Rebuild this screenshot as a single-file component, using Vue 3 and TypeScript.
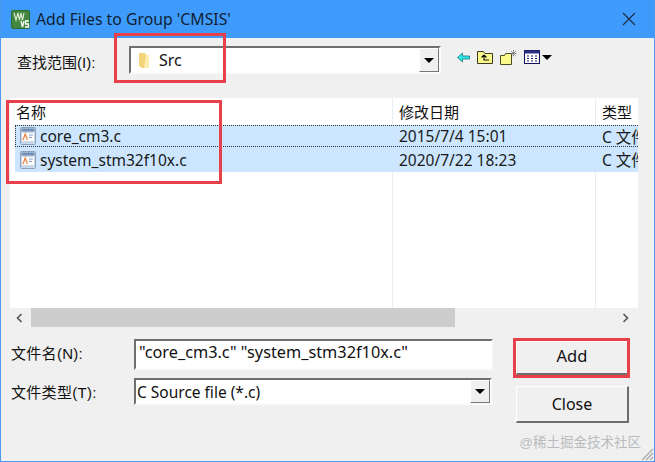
<script setup lang="ts">
interface FileRow { name: string; date: string; type: string; focus: boolean }
const files: FileRow[] = [
  { name: 'core_cm3.c', date: '2015/7/4 15:01', type: 'C 文件', focus: true },
  { name: 'system_stm32f10x.c', date: '2020/7/22 18:23', type: 'C 文件', focus: false },
]
</script>

<template>
  <div class="dialog">
    <header class="titlebar">
      <svg class="logo" width="19" height="19" viewBox="0 0 19 19">
        <rect width="19" height="19" rx="2" fill="#2f6f36" />
        <rect x="1" y="1" width="17" height="17" rx="1.500" fill="#44883f" />
        <path d="M3 3l2 7 2-7M7 3l1.500 7L10 3M10 3l1.500 7L13 3" stroke="#d8e8d0" stroke-width="1.200" fill="none" />
        <path d="M10 11l1.500 6 1.500-6" stroke="#fff" stroke-width="1.300" fill="none" />
        <path d="M18 11h-3.500v3h3v3h-3.500" stroke="#fff" stroke-width="1.300" fill="none" />
      </svg>
      <span class="title">Add Files to Group 'CMSIS'</span>
      <svg class="close-x" width="14" height="14" viewBox="0 0 14 14">
        <path d="M1 1l12 12M13 1L1 13" stroke="#1c2c44" stroke-width="1.100" />
      </svg>
    </header>

    <div class="body">
      <div class="look-row">
        <label class="look-label">查找范围(I):</label>
        <div class="combo look-combo">
          <svg class="folder" width="14" height="17" viewBox="0 0 14 17">
            <path d="M1 1h6l1 2h3v13H4L1 14z" fill="#f3d478" />
            <path d="M8 3h3v13H6z" fill="#fdeeb0" />
          </svg>
          <span class="look-value">Src</span>
          <span class="drop"><i class="tri"></i></span>
        </div>
        <div class="tools">
          <svg width="13" height="11" viewBox="0 0 13 11">
            <path d="M0.500 5.500L5.500 1v3h7v3h-7v3z" fill="#2fe6e6" stroke="#167a80" stroke-width="0.800" />
          </svg>
          <svg width="16" height="14" viewBox="0 0 16 14">
            <path d="M0.500 13.500V1.500h6l1.500 2h7.500v10z" fill="#fbf98c" stroke="#3a3a20" />
            <path d="M7 5L4.500 7.500M7 5l2.500 2.500M7 5v5h5" stroke="#111" stroke-width="1.100" fill="none" />
          </svg>
          <svg width="17" height="15" viewBox="0 0 17 15">
            <path d="M0.500 14.500V5.500h4l1-2h6v11z" fill="#fbf98c" stroke="#4a4a28" />
            <path d="M13.500 0v7M10 3.500h7M11 1l5 5M16 1l-5 5" stroke="#444" stroke-width="0.800" stroke-dasharray="1 0.700" />
          </svg>
          <div class="view-btn">
            <svg width="16" height="14" viewBox="0 0 16 14">
              <rect x="0.500" y="0.500" width="15" height="13" fill="#fff" stroke="#12125a" />
              <rect x="0.500" y="0.500" width="15" height="3" fill="#2b2f86" />
              <path d="M3 6h2M7 6h2M11 6h2M3 8.500h2M7 8.500h2M11 8.500h2M3 11h2M7 11h2M11 11h2" stroke="#1c1c66" stroke-width="1.200" />
            </svg>
            <i class="tri"></i>
          </div>
        </div>
      </div>

      <div class="list">
        <div class="grid-row head">
          <span class="cell name-cell">名称</span>
          <span class="cell date-cell">修改日期</span>
          <span class="cell type-cell">类型</span>
        </div>
        <div v-for="f in files" :key="f.name" class="grid-row item" :class="{ focus: f.focus }">
          <span class="cell name-cell">
            <svg class="file-ic" width="16" height="18" viewBox="0 0 16 18">
              <rect x="0.500" y="0.500" width="15" height="17" rx="1" fill="#c9d8e8" stroke="#8ea0b5" />
              <rect x="1.500" y="1.500" width="13" height="3" fill="#6f8fb5" />
              <rect x="2" y="6" width="12" height="8" fill="#fdfdfd" />
              <path d="M3 13l2.200-6 2.200 6" stroke="#e8803a" stroke-width="1.200" fill="none" />
              <path d="M9 8h4M9 10.500h3" stroke="#7f9cc4" />
            </svg>
            {{ f.name }}
          </span>
          <span class="cell date-cell">{{ f.date }}</span>
          <span class="cell type-cell">{{ f.type }}</span>
        </div>
        <div class="grid-row filler">
          <span class="name-cell"></span>
          <span class="date-cell"></span>
          <span class="type-cell"></span>
        </div>
      </div>

      <div class="scrollbar">
        <svg class="arrow" width="7" height="10" viewBox="0 0 7 10">
          <path d="M5.500 1L1.500 5l4 4" stroke="#555" stroke-width="1.600" fill="none" />
        </svg>
        <div class="thumb"></div>
        <svg class="arrow right" width="7" height="10" viewBox="0 0 7 10">
          <path d="M1.500 1l4 4-4 4" stroke="#555" stroke-width="1.600" fill="none" />
        </svg>
      </div>

      <div class="form">
        <div class="fields">
          <div class="field name-field">
            <label>文件名(N):</label>
            <div class="input name-input">"core_cm3.c" "system_stm32f10x.c"</div>
          </div>
          <div class="field type-field">
            <label>文件类型(T):</label>
            <div class="combo type-combo">
              <span class="type-value">C Source file (*.c)</span>
              <span class="drop"><i class="tri"></i></span>
            </div>
          </div>
        </div>
        <div class="buttons">
          <button class="btn add">Add</button>
          <button class="btn close">Close</button>
        </div>
      </div>
    </div>

    <div class="mark box1"></div>
    <div class="mark box2"></div>
    <div class="mark box3"></div>
    <span class="watermark">@稀土掘金技术社区</span>
    <svg class="grip" width="15" height="15" viewBox="0 0 15 15">
      <path d="M14 3L3 14M14 7L7 14M14 11l-3 3" stroke="#a8a8a8" stroke-width="1.200" />
    </svg>
  </div>
</template>

<style>
html, body { margin: 0; background: #f0f0f0; }
</style>

<style scoped>
.dialog {
  position: relative;
  width: 655px;
  height: 462px;
  box-sizing: border-box;
  display: flex;
  flex-direction: column;
  background: #f0f0f0;
  border: solid #4a9bef;
  border-width: 0 1px 1px 1px;
  overflow: hidden;
  font-family: "Liberation Sans", "Noto Sans CJK SC", sans-serif;
  font-size: 15px;
  color: #111;
}
.titlebar {
  height: 38px;
  flex: none;
  display: flex;
  align-items: center;
  background: #3f9bfb;
  padding: 0 18px 0 10px;
}
.logo { flex: none; }
.title { margin-left: 6px; font-size: 15.800px; color: #0f1e33; font-family: "Noto Sans", "Noto Sans CJK SC", sans-serif; }
.close-x { margin-left: auto; }
.body { flex: 1; display: flex; flex-direction: column; padding: 0 16px 0 9px; min-height: 0; }

.look-row { height: 60px; display: flex; align-items: flex-start; flex: none; }
.look-label { margin: 15px 0 0 7px; width: 112px; font-size: 15px; line-height: 20px; white-space: nowrap; }
.combo {
  position: relative;
  box-sizing: border-box;
  background: #fff;
  display: flex;
  align-items: center;
  border: 2px solid;
  border-color: #6f6f6f #fafafa #fafafa #6f6f6f;
}
.look-combo { width: 312px; height: 28px; margin-top: 8px; padding-left: 7px; }
.folder { flex: none; }
.look-value { margin-left: 7px; font-family: "Noto Sans", sans-serif; font-size: 16px; }
.drop {
  position: absolute;
  right: 0;
  top: 0;
  bottom: 0;
  width: 20px;
  box-sizing: border-box;
  background: #f0f0f0;
  border: 1px solid;
  border-color: #fff #777 #777 #fff;
  display: flex;
  align-items: center;
  justify-content: center;
}
.tri {
  display: block;
  width: 0;
  height: 0;
  border: solid transparent;
  border-width: 5px 5px 0;
  border-top-color: #000;
}
.tools { display: flex; align-items: center; margin: 10px 0 0 16px; gap: 7px; height: 18px; }
.view-btn { display: flex; align-items: center; gap: 2px; }

.list { height: 210px; flex: none; background: #fff; display: flex; flex-direction: column; width: 628px; overflow: hidden; }
.grid-row { display: grid; grid-template-columns: 382px 203px 43px; }
.cell { display: flex; align-items: center; padding-left: 6px; white-space: nowrap; overflow: hidden; font-size: 15.500px; font-family: "Noto Sans", "Noto Sans CJK SC", sans-serif; color: #1a1a1a; }
.head { height: 27px; }
.head .cell { font-size: 15px; color: #111; }
.date-cell, .type-cell { border-left: 1px solid #e6eef5; }
.item { background: #cce6ff; box-sizing: border-box; margin-left: 5px; grid-template-columns: 377px 203px 43px; }
.item.focus { height: 22px; border-top: 1px dotted #333; border-bottom: 1px dotted #333; border-left: 1px dotted #333; grid-template-columns: 376px 203px 43px; }
.item:not(.focus) { height: 25px; }
.item .name-cell { padding-left: 5px; gap: 4px; }
.item.focus .name-cell { padding-left: 4px; }
.item .date-cell, .item .type-cell { border-left-color: #cce6ff; }
.file-ic { flex: none; }
.filler { flex: 1; }

.scrollbar { height: 19px; flex: none; display: flex; align-items: center; width: 628px; }
.arrow { margin-left: 6px; flex: none; }
.thumb { margin-left: 8px; width: 424px; height: 19px; background: #cdcdcd; }
.arrow.right { margin-left: auto; margin-right: 9px; }

.form { display: flex; flex: none; }
.fields { width: 484px; flex: none; }
.field { display: flex; align-items: flex-start; }
.field label { width: 123px; margin-left: 1px; font-size: 15px; letter-spacing: 0.300px; line-height: 20px; flex: none; white-space: nowrap; }
.name-field { margin-top: 12px; height: 39px; }
.name-field label { margin-top: 5px; }
.type-field { height: 27px; }
.type-field label { margin-top: 5px; }
.input {
  box-sizing: border-box;
  background: #fff;
  width: 359px;
  height: 31px;
  border: 2px solid;
  border-color: #6f6f6f #fafafa #fafafa #6f6f6f;
  padding-left: 3px;
  line-height: 22px;
  font-family: "Noto Sans", sans-serif;
  font-size: 16.300px;
  white-space: nowrap;
}
.type-combo { width: 358px; height: 27px; padding-left: 1px; font-family: "Noto Sans", sans-serif; font-size: 15.500px; }
.buttons { display: flex; flex-direction: column; margin: 14px 0 0 22px; }
.btn {
  box-sizing: border-box;
  width: 113px;
  background: #f0f0f0;
  border: 1px solid;
  border-color: #fff #6c6c6c #6c6c6c #fff;
  border-width: 1px 2px 2px 1px;
  font-family: "Noto Sans", sans-serif;
  font-size: 16px;
  color: #111;
  padding: 0;
}
.add { height: 34px; padding-bottom: 4px; font-size: 16.500px; }
.close { height: 37px; margin-top: 11px; }

.mark { position: absolute; border: 3px solid #e8404a; box-sizing: border-box; }
.box1 { left: 113px; top: 33px; width: 112px; height: 50px; }
.box2 { left: 5px; top: 100px; width: 216px; height: 84px; }
.box3 { left: 512px; top: 338px; width: 117px; height: 40px; }
.watermark { position: absolute; right: 13px; top: 431px; font-size: 13.500px; color: #b9bcbf; }
.grip { position: absolute; right: 0; bottom: 0; }
</style>
